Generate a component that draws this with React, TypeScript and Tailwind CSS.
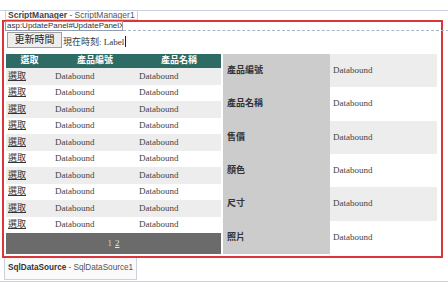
const rows = Array.from({ length: 10 }, (_, i) => i);
const fields = ["產品編號", "產品名稱", "售價", "顏色", "尺寸", "照片"];

export default function App() {
  return (
    <div className="w-[448px] h-[287px] bg-white overflow-hidden text-[#333] font-['Liberation_Serif','Noto_Sans_CJK_TC',serif]">
      <div className="h-[10px]" />

      {/* ScriptManager */}
      <div className="border-t border-[#c9d2de] h-[10px]">
        <div className="ml-[5px] w-[133px] h-[9px] border-x border-b border-[#c9d2de] pl-[2px] text-[8.5px] leading-[9px] overflow-hidden whitespace-nowrap font-['Liberation_Sans',sans-serif] text-[#555]">
          <span className="font-bold text-[#444]">ScriptManager</span> - ScriptManager1
        </div>
      </div>

      {/* UpdatePanel */}
      <div className="ml-[2px] w-[441px] h-[238px] border-2 border-[#d9353b]">
        <div className="flex items-end h-[9px]">
          <div className="ml-[1px] w-[118px] h-[10px] border border-[#8f9cb2] bg-white px-[1px] text-[8px] leading-[8px] whitespace-nowrap overflow-hidden font-['Liberation_Sans',sans-serif] text-[#333]">
            asp:UpdatePanel#UpdatePanelX
          </div>
          <div className="flex-1 -mr-[8px] border-b border-dashed border-[#aab3c4]" />
        </div>

        <div className="mt-[1px] ml-[3px] flex items-end h-[16px]">
          <button className="w-[55px] h-[16px] border border-[#a0a0a0] bg-[#ededed] text-[10px] leading-none text-[#222]">
            更新時間
          </button>
          <span className="ml-px text-[9px] leading-none pb-[1px] text-[#333]">
            現在時刻: Label
          </span>
          <span className="ml-px w-px h-[11px] bg-[#222] mb-[1px]" />
        </div>

        <div className="mt-[6px] ml-[2px] flex gap-[2px]">
          {/* GridView */}
          <div className="w-[215px] flex flex-col">
            <div className="flex h-[14px] bg-[#2d6b64] text-white font-bold text-[9px] items-center">
              <div className="w-[47px] text-center">選取</div>
              <div className="w-[84px] text-center">產品編號</div>
              <div className="w-[84px] text-center">產品名稱</div>
            </div>
            {rows.map((i) => (
              <div
                key={i}
                className={`flex h-[16.5px] items-center text-[9px] ${i % 2 === 0 ? "bg-[#ededed]" : "bg-white"}`}
              >
                <div className="w-[47px] pl-[2px] underline text-[#333]">選取</div>
                <div className="w-[84px] pl-[2px] text-[#444]">Databound</div>
                <div className="w-[84px] pl-[2px] text-[#444]">Databound</div>
              </div>
            ))}
            <div className="h-[21px] bg-[#6b6b6b] flex items-center justify-center text-[9px] gap-[3px]">
              <span className="text-[#cfcfcf]">1</span>
              <span className="text-[#e6e6e6] underline">2</span>
            </div>
          </div>

          {/* DetailsView */}
          <div className="w-[214px] h-[200px] flex flex-col">
            {fields.map((f, i) => (
              <div key={f} className="flex flex-1">
                <div className="w-[107px] bg-[#cccccc] flex items-center pl-[4px] text-[9px] font-bold text-[#333]">
                  {f}
                </div>
                <div
                  className={`w-[107px] flex items-center pl-[3px] text-[9px] text-[#444] ${i % 2 === 0 ? "bg-[#ededed]" : "bg-white"}`}
                >
                  Databound
                </div>
              </div>
            ))}
          </div>
        </div>
      </div>

      {/* SqlDataSource */}
      <div className="h-[24px] border-b border-[#c9d2de]">
        <div className="ml-[4px] w-[133px] h-[22px] border-x border-b border-[#c9d2de] bg-[#fafafa] flex items-center pl-[3px] text-[8.2px] whitespace-nowrap font-['Liberation_Sans',sans-serif] text-[#555]">
          <span className="font-bold text-[#333]">SqlDataSource</span>&nbsp;- SqlDataSource1
        </div>
      </div>
    </div>
  );
}
